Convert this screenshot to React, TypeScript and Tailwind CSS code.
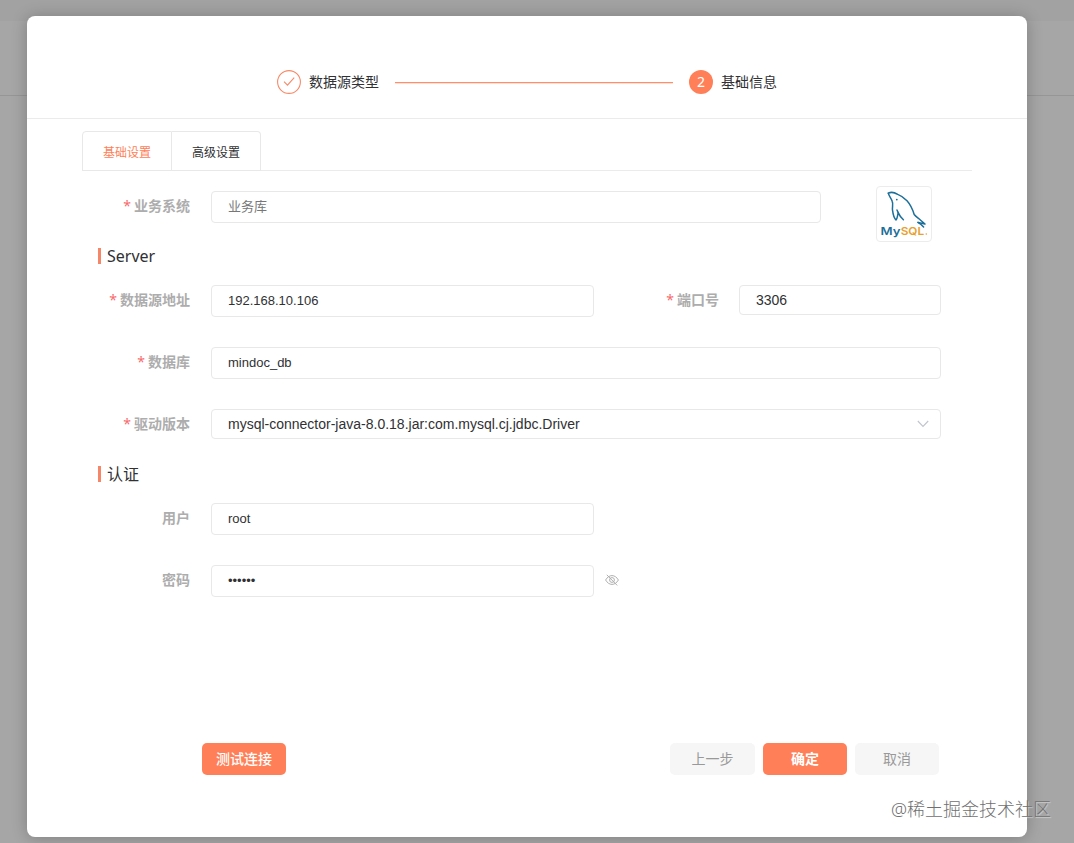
import type { ReactNode } from "react";

type LabelProps = {
  text: string;
  required?: boolean;
  className?: string;
};

const Label = ({ text, required, className = "w-[108px]" }: LabelProps) => (
  <label
    className={`${className} flex h-[30px] shrink-0 items-center justify-end text-sm font-bold text-[#adadad]`}
  >
    {required && (
      <span className="mr-[3px] font-['Noto_Sans'] font-normal text-[#f56c6c]">*</span>
    )}
    {text}
  </label>
);

const Field = ({ children, className }: { children: ReactNode; className: string }) => (
  <div
    className={`${className} flex shrink-0 items-center rounded-[4px] border border-[#e8e8e8] px-4 font-['Liberation_Sans','Noto_Sans_CJK_SC',sans-serif] text-[#303133]`}
  >
    {children}
  </div>
);

const SectionTitle = ({ text }: { text: string }) => (
  <h3 className="ml-4 flex h-4 items-center gap-1.5 text-base leading-4 text-[#303133]">
    <span className="h-4 w-[3px] bg-[#f58668]" />
    {text}
  </h3>
);

const MysqlLogo = () => (
  <div className="ml-[55px] h-14 w-14 shrink-0 rounded-[4px] border border-[#ececec]">
    <svg viewBox="0 0 54 54" className="h-full w-full" fill="none">
      <g stroke="#1d6f99" strokeWidth="1.5" strokeLinecap="round" strokeLinejoin="round">
        <path d="M11.3 6.2C14 4.8 17.5 5.4 20.7 7.4C24 8.6 27.4 11 30 13.8C33.2 17.4 35.5 22 37.2 27.5C39 30 41.5 31.2 43.6 33.2C44.9 34.4 46.3 35.6 48 37.1C46 36.4 43.8 35.8 41 35.4" />
        <path d="M11.3 6.2C11.8 8.8 14.2 11 15.2 14.3C16.6 17 14.8 20.6 15.6 23.7C16 27 17.2 31.2 19 33C20.4 31.6 20.4 29 21.2 25.6C22.6 28.8 24.4 31 26.4 32.8" />
        <path d="M21.2 25.6C20.7 24.8 20.4 24 20 23" />
        <path d="M41 35.4C43.6 37 45.2 38.4 46.6 40" />
      </g>
      <circle cx="19.8" cy="12.6" r="0.9" fill="#1d6f99" />
      <text
        x="3.4"
        y="48"
        fontFamily="Inter"
        fontSize="11"
        fontWeight="600"
        fill="#1d6f99"
        textLength="20"
        lengthAdjust="spacingAndGlyphs"
      >
        My
      </text>
      <text
        x="23.7"
        y="48"
        fontFamily="Inter"
        fontSize="11"
        fontWeight="600"
        fill="#e8a02e"
        textLength="23.5"
        lengthAdjust="spacingAndGlyphs"
      >
        SQL
      </text>
      <circle cx="49.3" cy="47" r="0.8" fill="#e8a02e" />
    </svg>
  </div>
);

const Steps = () => (
  <div className="flex h-[103px] items-start border-b border-[#ebebeb] pt-[54px] pl-[250px] text-sm text-[#303133]">
    <div className="flex h-6 items-center">
      <svg viewBox="0 0 24 24" className="h-6 w-6" fill="none" stroke="#f78a68">
        <circle cx="12" cy="12" r="11.4" strokeWidth="1.1" />
        <path d="M7 11.7L10.5 15.1L17.2 7.7" strokeWidth="1.1" />
      </svg>
      <span className="ml-2">数据源类型</span>
      <span className="mt-0.5 ml-4 h-0.5 w-[278px] border-t border-[#ff8e6b] bg-[#ffe0d6]" />
      <span className="ml-4 flex h-6 w-6 items-center justify-center rounded-full bg-[#ff7f59] font-['Noto_Sans'] text-white">
        2
      </span>
      <span className="ml-2">基础信息</span>
    </div>
  </div>
);

const Tabs = () => (
  <div className="flex h-10 w-[890px] border-b border-[#ebebeb] text-xs">
    <div className="flex h-10 w-[90px] items-center justify-center rounded-tl-[4px] border border-[#e8e8e8] pt-1 text-[#ff8058]">
      基础设置
    </div>
    <div className="flex h-10 w-[89px] items-center justify-center rounded-tr-[4px] border border-l-0 border-[#e8e8e8] pt-1 text-[#303133]">
      高级设置
    </div>
  </div>
);

const App = () => {
  return (
    <div className="relative h-[843px] w-[1074px] overflow-hidden bg-[#a6a6a6] font-['Noto_Sans','Noto_Sans_CJK_SC',sans-serif]">
      <div className="h-[21px] bg-[#a2a2a2]" />
      <div className="h-[75px] border-b border-[#969696]" />

      <div className="absolute top-4 left-[27px] h-[821px] w-[1000px] rounded-[8px] bg-white shadow-[0_1px_16px_rgba(0,0,0,0.24)]">
        <Steps />
        <div className="px-[55px] pt-3">
          <Tabs />

          <div className="mt-[15px] flex h-14">
            <div className="flex pt-[5px]">
              <Label text="业务系统" required />
              <Field className="ml-[21px] h-8 w-[610px] text-[13px]">
                <span className="text-[#777]">业务库</span>
              </Field>
            </div>
            <MysqlLogo />
          </div>

          <div className="mt-1.5">
            <SectionTitle text="Server" />
          </div>
          <div className="mt-[21px] flex h-8">
            <Label text="数据源地址" required />
            <Field className="ml-[21px] h-8 w-[383px] text-[13px]">192.168.10.106</Field>
            <Label text="端口号" required className="w-[125px]" />
            <Field className="ml-5 h-[30px] w-[202px] text-sm">3306</Field>
          </div>
          <div className="mt-[30px] flex h-8">
            <Label text="数据库" required />
            <Field className="ml-[21px] h-8 w-[730px] text-[13px]">mindoc_db</Field>
          </div>
          <div className="mt-[30px] flex h-[30px]">
            <Label text="驱动版本" required />
            <Field className="ml-[21px] h-[30px] w-[730px] justify-between text-sm">
              <span>mysql-connector-java-8.0.18.jar:com.mysql.cj.jdbc.Driver</span>
              <svg
                viewBox="0 0 12 8"
                className="-mr-[5px] h-2 w-3"
                fill="none"
                stroke="#c0c4cc"
                strokeWidth="1.1"
              >
                <path d="M0.8 1L6 6.4L11.2 1" />
              </svg>
            </Field>
          </div>

          <div className="mt-[27px]">
            <SectionTitle text="认证" />
          </div>
          <div className="mt-[21px] flex h-8">
            <Label text="用户" />
            <Field className="ml-[21px] h-8 w-[383px] text-[13px]">root</Field>
          </div>
          <div className="mt-[30px] flex h-8 items-start">
            <Label text="密码" />
            <Field className="ml-[21px] h-8 w-[383px] text-[13px]">••••••</Field>
            <svg
              viewBox="0 0 14 12"
              className="mt-[9px] ml-[11px] h-3 w-3.5"
              fill="none"
              stroke="#b0b0b0"
            >
              <path d="M0.6 6C2.2 3.2 4.5 1.6 7 1.6S11.8 3.2 13.4 6C11.8 8.8 9.5 10.4 7 10.4S2.2 8.8 0.6 6Z" />
              <circle cx="7" cy="6" r="2.4" />
              <path d="M1.8 0.8L12.2 11.4" />
            </svg>
          </div>

          <div className="mt-[146px] flex h-8 pl-[120px] text-sm">
            <button className="h-8 w-[84px] rounded-[5px] bg-[#ff8058] font-medium text-white">
              测试连接
            </button>
            <button className="ml-96 h-8 w-[85px] rounded-[5px] bg-[#f6f6f6] text-[#999]">
              上一步
            </button>
            <button className="ml-2 h-8 w-[84px] rounded-[5px] bg-[#ff8058] font-bold text-white">
              确定
            </button>
            <button className="ml-2 h-8 w-[84px] rounded-[5px] bg-[#f6f6f6] text-[#999]">
              取消
            </button>
          </div>
        </div>
      </div>

      <div className="absolute right-[23px] bottom-5 text-lg font-light text-[#707070] [text-shadow:1px_1px_1px_rgba(255,255,255,0.5)]">
        @稀土掘金技术社区
      </div>
    </div>
  );
};

export default App;
